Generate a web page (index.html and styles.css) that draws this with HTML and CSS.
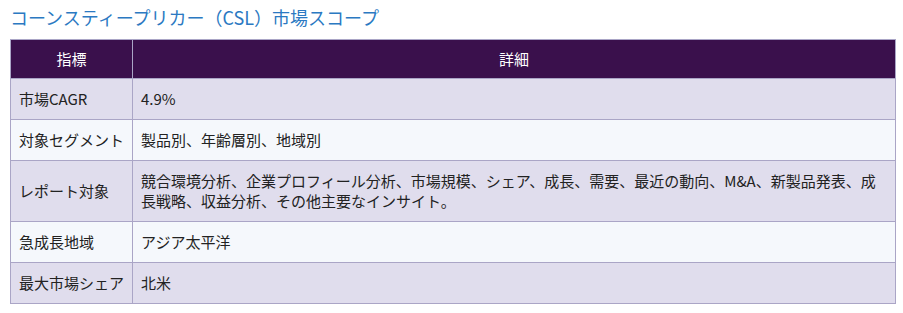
FILE: index.html
```html
<!DOCTYPE html>
<html lang="ja">
<head>
<meta charset="utf-8">
<link rel="stylesheet" href="styles.css">
</head>
<body>
<div class="wrap">
  <h2 class="title">コーンスティープリカー（CSL）市場スコープ</h2>
  <table class="scope">
    <thead>
      <tr><th class="c1">指標</th><th>詳細</th></tr>
    </thead>
    <tbody>
      <tr><td class="c1">市場CAGR</td><td>4.9%</td></tr>
      <tr><td class="c1">対象セグメント</td><td>製品別、年齢層別、地域別</td></tr>
      <tr><td class="c1">レポート対象</td><td>競合環境分析、企業プロフィール分析、市場規模、シェア、成長、需要、最近の動向、M&amp;A、新製品発表、成長戦略、収益分析、その他主要なインサイト。</td></tr>
      <tr><td class="c1">急成長地域</td><td>アジア太平洋</td></tr>
      <tr><td class="c1">最大市場シェア</td><td>北米</td></tr>
    </tbody>
  </table>
</div>
</body>
</html>
```

FILE: styles.css
```css
html, body { margin: 0; padding: 0; background: #ffffff; }
body {
  font-family: "Noto Sans CJK JP", "Noto Sans", sans-serif;
  color: #222;
}
.wrap { padding: 5px 8px 0 10px; }
.title {
  margin: 0 0 9px 0;
  font-size: 18px;
  font-weight: normal;
  line-height: 25px;
  color: #2b79c2;
}
.scope {
  width: 886px;
  border-collapse: collapse;
  font-size: 15px;
  line-height: 20px;
}
.scope th, .scope td {
  border: 1px solid #aaa5c6;
  padding: 10px 8px;
  text-align: left;
  vertical-align: middle;
  font-weight: normal;
}
.scope th {
  padding: 9px 8px;
  background: #3a104c;
  color: #ffffff;
  text-align: center;
  border-color: #aaa5c6;
}
.scope .c1 { width: 105px; }
.scope tbody tr:nth-child(odd) td { background: #e0dded; }
.scope tbody tr:nth-child(even) td { background: #f5f8fc; }
```
